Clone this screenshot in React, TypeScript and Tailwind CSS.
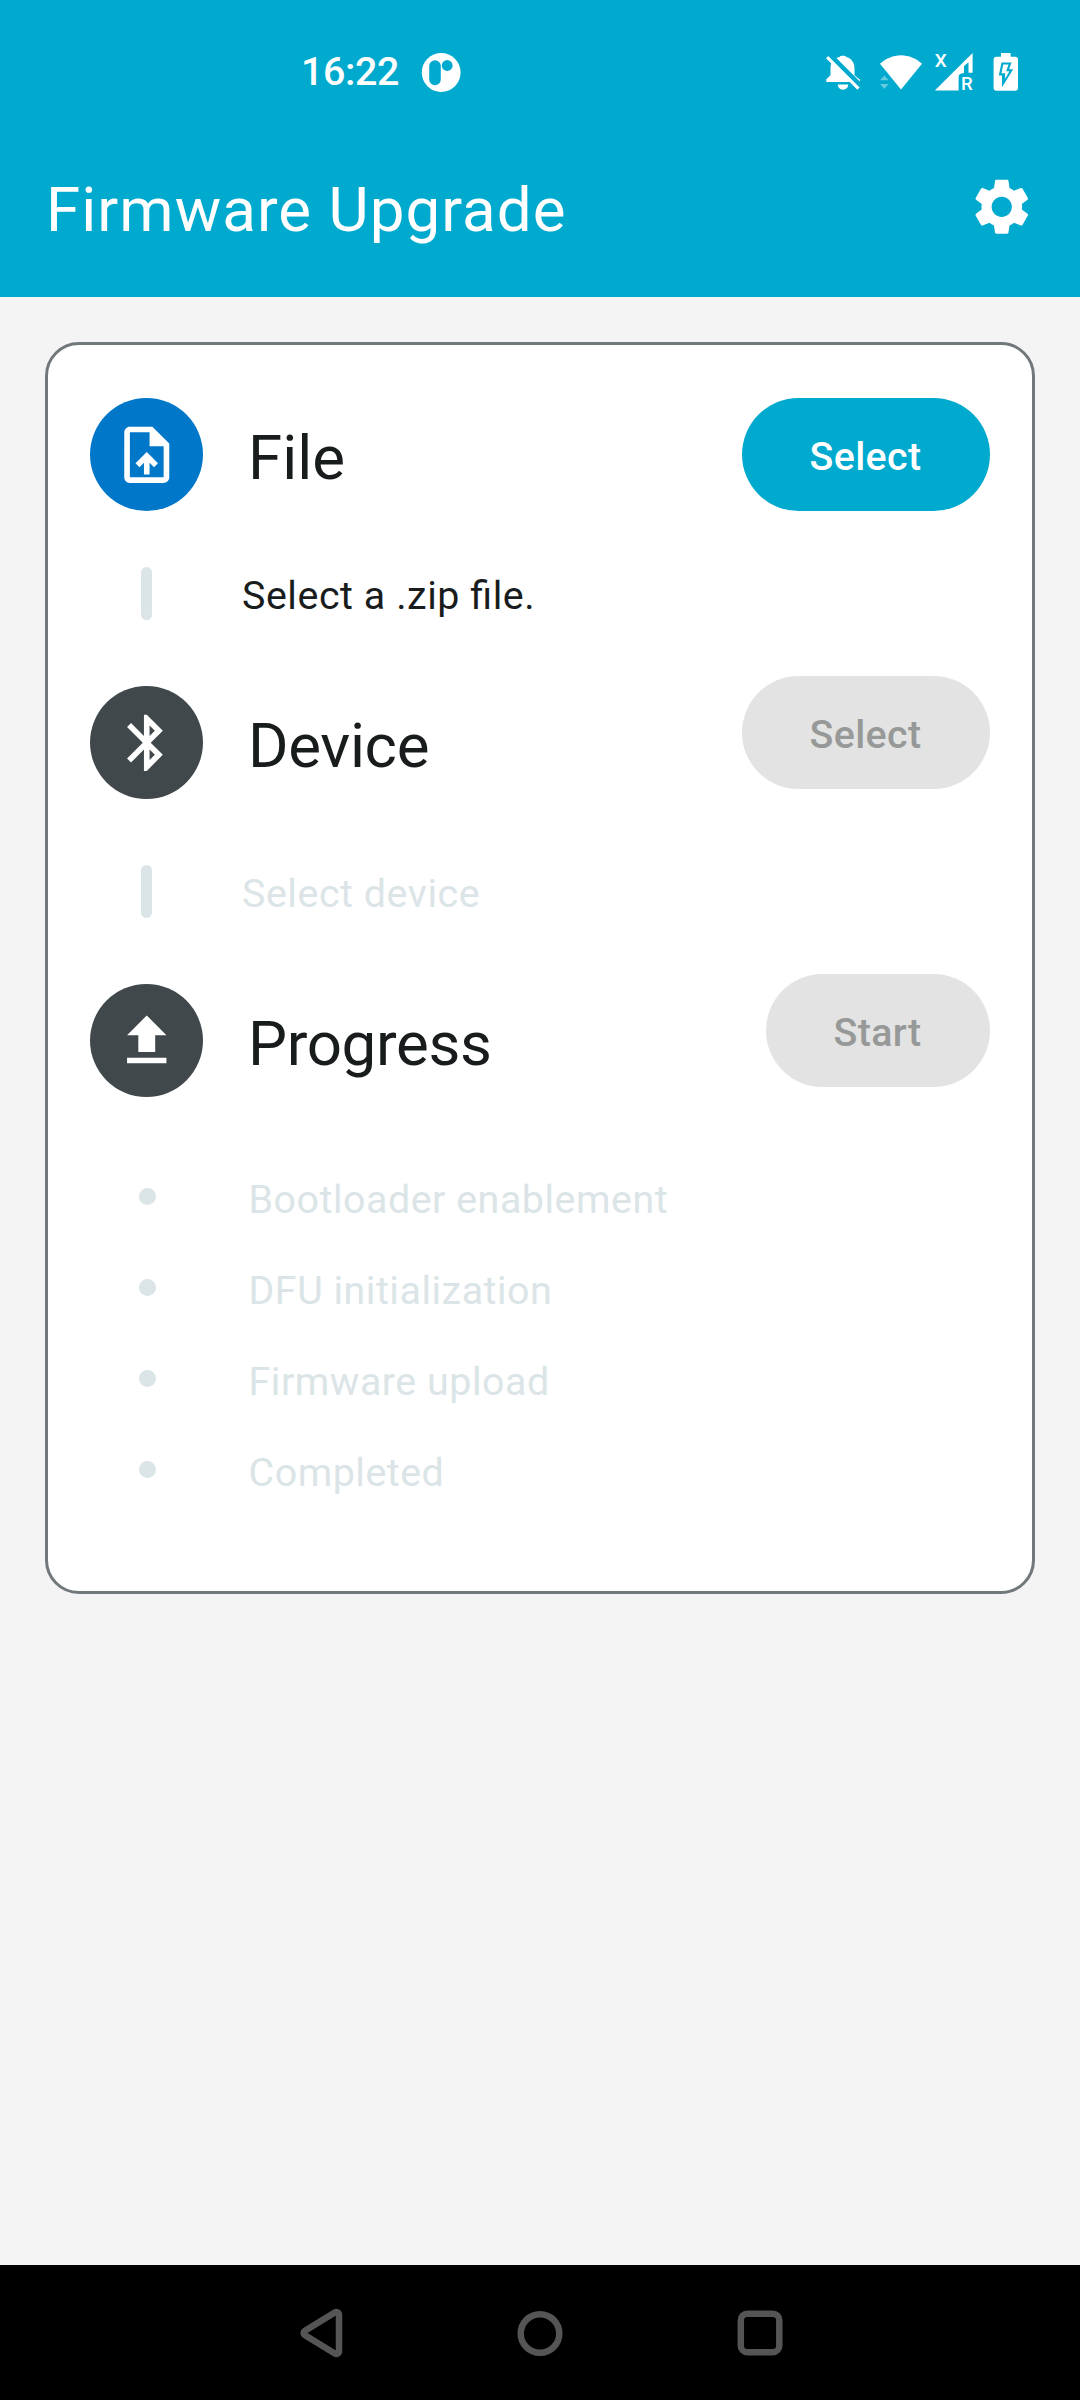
import type { ReactNode } from "react";

function StatusBar() {
  return (
    <div className="flex h-[118px] items-start text-white">
      <div className="ml-[301px] mt-[48px] w-[118px] text-[39.375px] leading-[47px] font-medium tracking-[-0.4px]">16:22</div>
      <svg className="mt-[50px] h-[44px] w-[44px] shrink-0" viewBox="419 50 44 44" aria-label="Parking notification">
        <circle cx="441.2" cy="72.5" r="19.4" fill="#fff" />
        <rect x="429.2" y="60.2" width="11.6" height="25" rx="5.8" fill="#00a9ce" />
        <circle cx="447.2" cy="65.5" r="5.4" fill="#00a9ce" />
      </svg>
      <svg className="ml-[357px] mt-[50px] h-[44px] w-[204px] shrink-0" viewBox="820 50 204 44" fill="#fff">
        {/* muted bell */}
        <path d="M826.3 82v-2.8l4.200-4V68c0-2 .4-4 1.200-5.600L850.500 82zM835.600 58.800c1.300-1 2.700-1.700 4.300-2v-.3c0-.6 1.200-.8 3-.8s3 .2 3 .8v.3c5.500 1.300 8.600 6 8.600 11.500v7l5.500 4.500v1.700l-1.500.3z" />
        <path d="M837.800 84.500h10.400c0 2.900-2.300 5.200-5.200 5.200s-5.200-2.300-5.200-5.200z" />
        <path d="M826 58.200l2.200-2.300 31.400 31.500-2.200 2.300z" />
        <path d="M829.300 57l29 29" stroke="#00a9ce" strokeWidth="2.200" transform="translate(2.300 -2.300)" />
        {/* wifi with activity arrows */}
        <path d="M901 89.500L880 63.800c5.600-5 13-8.500 21-8.500s15.400 3.500 21 8.500z" />
        <path d="M880 80.300l4.300-4.800 4.300 4.800zM880 84l4.300 5 4.300-5z" opacity=".4" />
        {/* roaming signal */}
        <path d="M972.600 53v19.800h-4.100V62.300L964 66v7.200h-1c-2.700 0-4.400 1.500-4.400 4V90.500h-23.800z" />
        <text x="934.800" y="67" fontSize="19" fontWeight="500" fontFamily="Roboto, sans-serif">X</text>
        <text x="961" y="90.400" fontSize="18.500" fontWeight="500" fontFamily="Roboto, sans-serif">R</text>
        {/* charging battery */}
        <path fillRule="evenodd" d="M1001 53h9.600v3.700h4.700c1.500 0 2.700 1.200 2.700 2.700v28.700c0 1.500-1.200 2.700-2.700 2.700h-19c-1.500 0-2.700-1.200-2.700-2.700V59.400c0-1.500 1.200-2.700 2.700-2.700h4.700zM1001.500 62.500l-2.700 13h3.200v11.800l11.200-18h-4l2.300-6.800z" />
        <path d="M1003.300 64.600h5.200l-2.300 6.700h3.200l-4.300 7.600v-5.600h-3.700z" />
      </svg>
    </div>
  );
}

function StepIcon({ path, active }: { path: string; active?: boolean }) {
  return (
    <div className={`flex h-[113px] w-[113px] shrink-0 items-center justify-center self-end rounded-full ${active ? "bg-[#0077c8]" : "bg-[#40484b]"}`}>
      <svg className="h-[67.5px] w-[67.5px]" viewBox="0 0 24 24" fill="#fff">
        <path d={path} />
      </svg>
    </div>
  );
}

function StepHeader({ icon, title, action, active }: { icon: string; title: string; action: string; active?: boolean }) {
  return (
    <div className={`flex items-start ${active ? "h-[113px]" : "h-[123px]"}`}>
      <StepIcon path={icon} active={active} />
      <h2 className={`ml-[45px] mb-[14px] self-end text-[61.875px] leading-[78px] ${active ? "" : "tracking-[-0.35px]"}`}>{title}</h2>
      <button
        className={`ml-auto h-[113px] rounded-full pl-[67px] pr-[68px] pt-[5px] text-[39.375px] font-medium tracking-[0.4px] ${
          action === "Start" ? "w-[224px]" : "w-[248px]"
        } ${active ? "bg-[#00a9ce] text-white" : "bg-[#e3e3e3] text-[#979998]"}`}
      >
        {action}
      </button>
    </div>
  );
}

function StepNote({ children, muted }: { children: ReactNode; muted?: boolean }) {
  return (
    <div className="mb-[56px] flex h-[53px] items-center">
      <div className="ml-[51px] h-[53px] w-[11px] rounded-full bg-[#dbe4e7]" />
      <p
        className={`ml-[90px] pt-[5px] text-[39.375px] leading-[50px] tracking-[0.56px] [font-feature-settings:'liga'] ${
          muted ? "text-[#dbe4e7]" : "text-[#191c1d]"
        }`}
      >
        {children}
      </p>
    </div>
  );
}

const FILE_ICON =
  "M14 2H6c-1.100 0-1.990.9-1.990 2L4 20c0 1.100.89 2 1.990 2H18c1.100 0 2-.9 2-2V8l-6-6zm4 18H6V4h7v5h5v11zM8 15.010l1.410 1.410L11 14.840V19h2v-4.160l1.590 1.590L16 15.010 12.010 11 8 15.010z";
const BLUETOOTH_ICON =
  "M17.710 7.710L12 2h-1v7.590L6.410 5 5 6.410 10.590 12 5 17.590 6.410 19 11 14.410V22h1l5.710-5.710-4.300-4.290 4.300-4.290zM13 5.830l1.880 1.880L13 9.590V5.830zm1.880 10.460L13 18.170v-3.760l1.880 1.880z";
const UPLOAD_ICON = "M5 20h14v-2H5v2zM5 10h4v6h6v-6h4l-7-7-7 7z";
const SETTINGS_ICON =
  "M19.140 12.940c.04-.3.06-.61.06-.94 0-.32-.02-.64-.07-.94l2.030-1.580c.18-.14.23-.41.12-.61l-1.920-3.320c-.12-.22-.37-.29-.59-.22l-2.390.96c-.5-.38-1.030-.7-1.620-.94l-.36-2.540c-.04-.24-.24-.41-.48-.41h-3.840c-.24 0-.43.17-.47.41l-.36 2.540c-.59.24-1.130.57-1.620.94l-2.390-.96c-.22-.08-.47 0-.59.22L2.740 8.870c-.12.21-.08.47.12.61l2.030 1.580c-.05.3-.09.63-.09.94s.02.64.07.94l-2.030 1.580c-.18.14-.23.41-.12.61l1.920 3.320c.12.22.37.29.59.22l2.390-.96c.5.38 1.030.7 1.620.94l.36 2.540c.05.24.24.41.48.41h3.840c.24 0 .44-.17.47-.41l.36-2.540c.59-.24 1.130-.56 1.620-.94l2.390.96c.22.08.47 0 .59-.22l1.920-3.320c.12-.22.07-.47-.12-.61l-2.010-1.580zM12 15.600c-1.980 0-3.600-1.620-3.600-3.600s1.620-3.600 3.600-3.600 3.600 1.620 3.600 3.600-1.620 3.600-3.600 3.600z";

const STAGES = ["Bootloader enablement", "DFU initialization", "Firmware upload", "Completed"];

export default function App() {
  return (
    <div className="flex h-[2400px] w-[1080px] flex-col overflow-hidden bg-[#f4f4f4] font-['Roboto',sans-serif] text-[#191c1d]">
      <header className="h-[297px] shrink-0 bg-[#00a9ce] text-white">
        <StatusBar />
        <div className="flex h-[179px] items-start justify-between pl-[46px] pr-[45px]">
          <h1 className="mt-[52px] text-[61.875px] leading-[80px] tracking-[1.05px]">Firmware Upgrade</h1>
          <button aria-label="Settings" className="mt-[55px]">
            <svg className="h-[67.5px] w-[67.5px]" viewBox="0 0 24 24" fill="#fff">
              <path d={SETTINGS_ICON} />
            </svg>
          </button>
        </div>
      </header>

      <main className="flex-1 px-[45px] pt-[45px]">
        <section className="h-[1252px] rounded-[34px] border-[3px] border-[#70787b] bg-white px-[42px] pt-[53px]">
          <StepHeader icon={FILE_ICON} title="File" action="Select" active />
          <div className="h-[56px]" />
          <StepNote>Select a .zip file.</StepNote>
          <StepHeader icon={BLUETOOTH_ICON} title="Device" action="Select" />
          <div className="h-[66px]" />
          <StepNote muted>Select device</StepNote>
          <StepHeader icon={UPLOAD_ICON} title="Progress" action="Start" />
          <ul className="mt-[54px] text-[39.375px] tracking-[0.53px] text-[#dbe4e7]">
            {STAGES.map((stage) => (
              <li key={stage} className="flex h-[91px] items-center">
                <span className="ml-[48.5px] h-[17.5px] w-[17.5px] rounded-full bg-[#dbe4e7]" />
                <span className="ml-[92.5px] pt-[6px] leading-[50px]">{stage}</span>
              </li>
            ))}
          </ul>
        </section>
      </main>

      <nav className="flex h-[135px] shrink-0 items-center justify-between bg-black px-[294px]">
        <svg className="h-[56px] w-[56px]" viewBox="294.500 2305 56 56" fill="none" stroke="#555" strokeWidth="6.500" strokeLinejoin="round">
          <path d="M305.500 2330.800l29.800-18.300c2-1.200 4.200 0 4.200 2.200v36.600c0 2.200-2.200 3.400-4.200 2.200l-29.800-18.300c-1.900-1.200-1.900-3.200 0-4.400z" />
        </svg>
        <svg className="h-[56px] w-[56px]" viewBox="0 0 56 56" fill="none" stroke="#555" strokeWidth="6.500">
          <circle cx="28" cy="28.500" r="19.300" />
        </svg>
        <svg className="h-[56px] w-[56px]" viewBox="730 2305 56 56" fill="none" stroke="#555" strokeWidth="6.500">
          <rect x="740.800" y="2313.700" width="38.500" height="38.500" rx="6.500" />
        </svg>
      </nav>
    </div>
  );
}
